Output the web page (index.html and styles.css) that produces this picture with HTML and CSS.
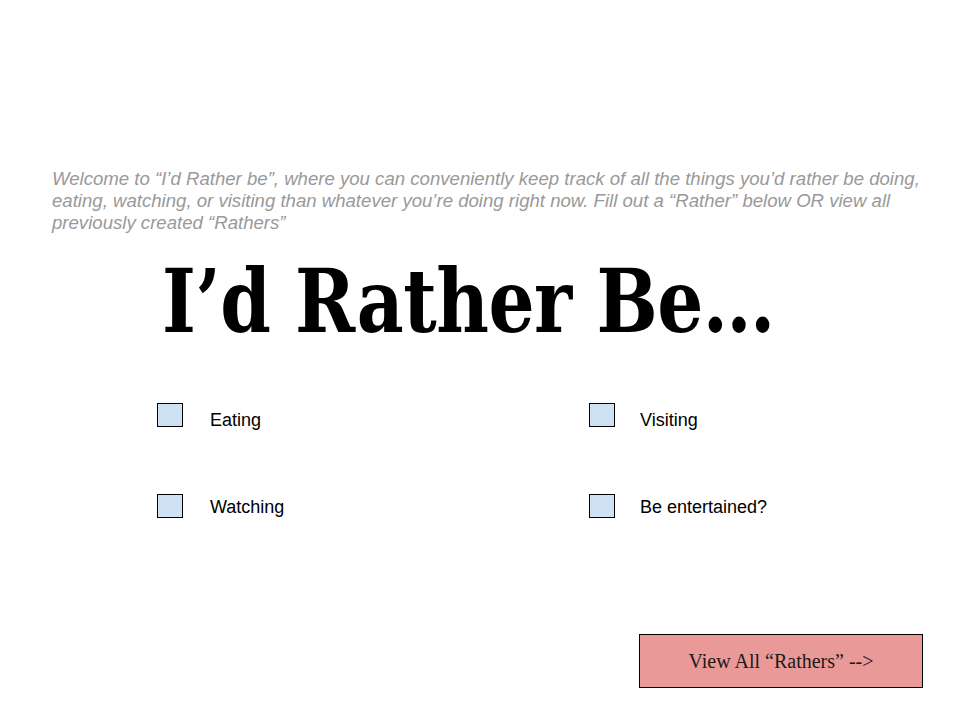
FILE: index.html
```html
<!DOCTYPE html>
<html>
<head>
<meta charset="utf-8">
<link rel="stylesheet" href="styles.css">
</head>
<body>
<div class="page">
  <p class="intro">Welcome to “I’d Rather be”, where you can conveniently keep track of all the things you’d rather be doing, eating, watching, or visiting than whatever you’re doing right now. Fill out a “Rather” below OR view all previously created “Rathers”</p>
  <h1 class="title">I’d Rather Be…</h1>
  <div class="options">
    <label class="option"><span class="box"></span><span class="label">Eating</span></label>
    <label class="option option-right"><span class="box"></span><span class="label">Visiting</span></label>
    <label class="option option-low"><span class="box"></span><span class="label">Watching</span></label>
    <label class="option option-right option-low"><span class="box"></span><span class="label">Be entertained?</span></label>
  </div>
  <div class="actions">
    <a class="view-all">View All “Rathers” --&gt;</a>
  </div>
</div>
</body>
</html>
```
FILE: styles.css
```css
html, body {
  margin: 0;
  padding: 0;
  background: #fff;
}
.page {
  width: 960px;
  height: 720px;
  box-sizing: border-box;
  padding-top: 168px;
}
.intro {
  margin: 0 0 0 52px;
  width: 885px;
  font-family: "Liberation Sans", Arial, sans-serif;
  font-style: italic;
  font-size: 18.6px;
  line-height: 22px;
  color: #999999;
}
.title {
  margin: 17px 0 0 162px;
  font-family: "DejaVu Serif Condensed", "DejaVu Serif", serif;
  font-weight: bold;
  font-size: 88px;
  line-height: 100px;
  color: #000;
  letter-spacing: -0.5px;
  transform: scaleX(0.915);
  transform-origin: left center;
  white-space: nowrap;
}
.options {
  display: grid;
  grid-template-columns: 432px 300px;
  row-gap: 64px;
  margin: 52px 0 0 157px;
}
.option {
  display: flex;
  align-items: flex-start;
  gap: 27px;
  height: 27px;
}
.option-right {
  gap: 25px;
}
.box {
  width: 24px;
  height: 22px;
  background: #cfe2f3;
  border: 1px solid #000;
}
.label {
  font-family: "Liberation Sans", Arial, sans-serif;
  font-size: 18px;
  line-height: 20px;
  color: #000;
  margin-top: 7px;
}
.option-low .label {
  margin-top: 3px;
}
.actions {
  display: flex;
  justify-content: flex-end;
  margin: 113px 37px 0 0;
}
.view-all {
  display: flex;
  align-items: center;
  justify-content: center;
  width: 282px;
  height: 52px;
  background: #ea9999;
  border: 1px solid #000;
  font-family: "Liberation Serif", "Times New Roman", serif;
  font-size: 20px;
  color: #1a1a1a;
}
```
